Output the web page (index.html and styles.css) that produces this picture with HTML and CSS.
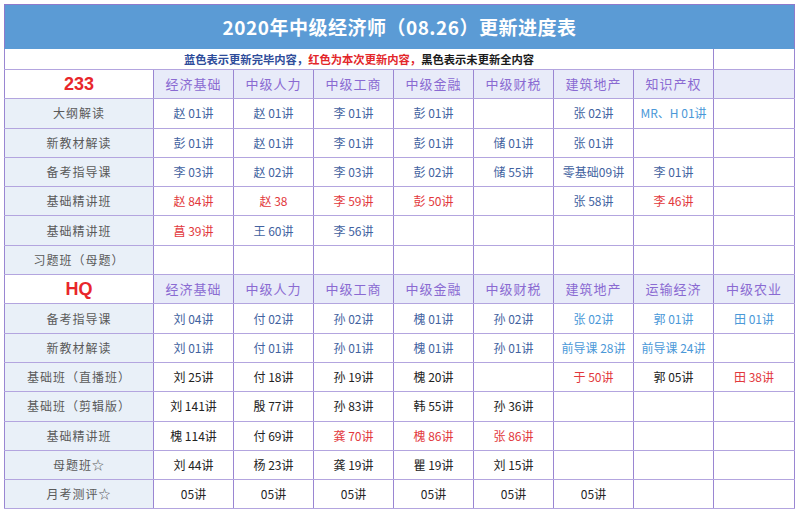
FILE: index.html
```html
<!DOCTYPE html>
<html lang="zh-CN">
<head>
<meta charset="utf-8">
<title>2020年中级经济师（08.26）更新进度表</title>
<link rel="stylesheet" href="styles.css">
</head>
<body>
<table class="sheet">
  <colgroup>
    <col class="c-label">
    <col class="c-data"><col class="c-data"><col class="c-data"><col class="c-data">
    <col class="c-data"><col class="c-data"><col class="c-data"><col class="c-last">
  </colgroup>
  <tr class="r-title"><td colspan="9" class="title">2020年中级经济师（08.26）更新进度表</td></tr>
  <tr class="r-note">
    <td colspan="8" class="note"><span class="n-blue">蓝色表示更新完毕内容，</span><span class="n-red">红色为本次更新内容，</span><span class="n-black">黑色表示未更新全内容</span></td>
    <td></td>
  </tr>

  <tr class="r-head">
    <td class="brand">233</td>
    <td class="hd">经济基础</td><td class="hd">中级人力</td><td class="hd">中级工商</td><td class="hd">中级金融</td>
    <td class="hd">中级财税</td><td class="hd">建筑地产</td><td class="hd">知识产权</td><td class="hd"></td>
  </tr>
  <tr>
    <td class="lbl">大纲解读</td>
    <td class="b">赵 01讲</td><td class="b">赵 01讲</td><td class="b">李 01讲</td><td class="b">彭 01讲</td>
    <td></td><td class="b">张 02讲</td><td class="lb">MR、H 01讲</td><td></td>
  </tr>
  <tr>
    <td class="lbl">新教材解读</td>
    <td class="b">彭 01讲</td><td class="b">赵 01讲</td><td class="b">李 01讲</td><td class="b">彭 01讲</td>
    <td class="b">储 01讲</td><td class="b">张 01讲</td><td></td><td></td>
  </tr>
  <tr>
    <td class="lbl">备考指导课</td>
    <td class="b">李 03讲</td><td class="b">赵 02讲</td><td class="b">李 03讲</td><td class="b">彭 02讲</td>
    <td class="b">储 55讲</td><td class="b">零基础09讲</td><td class="b">李 01讲</td><td></td>
  </tr>
  <tr>
    <td class="lbl">基础精讲班</td>
    <td class="r">赵 84讲</td><td class="r">赵 38</td><td class="r">李 59讲</td><td class="r">彭 50讲</td>
    <td></td><td class="b">张 58讲</td><td class="r">李 46讲</td><td></td>
  </tr>
  <tr>
    <td class="lbl">基础精讲班</td>
    <td class="r">菖 39讲</td><td class="b">王 60讲</td><td class="b">李 56讲</td><td></td>
    <td></td><td></td><td></td><td></td>
  </tr>
  <tr>
    <td class="lbl">习题班（母题）</td>
    <td></td><td></td><td></td><td></td><td></td><td></td><td></td><td></td>
  </tr>

  <tr class="r-head">
    <td class="brand">HQ</td>
    <td class="hd">经济基础</td><td class="hd">中级人力</td><td class="hd">中级工商</td><td class="hd">中级金融</td>
    <td class="hd">中级财税</td><td class="hd">建筑地产</td><td class="hd">运输经济</td><td class="hd">中级农业</td>
  </tr>
  <tr>
    <td class="lbl">备考指导课</td>
    <td class="b">刘 04讲</td><td class="b">付 02讲</td><td class="b">孙 02讲</td><td class="b">槐 01讲</td>
    <td class="b">孙 02讲</td><td class="lb">张 02讲</td><td class="lb">郭 01讲</td><td class="lb">田 01讲</td>
  </tr>
  <tr>
    <td class="lbl">新教材解读</td>
    <td class="b">刘 01讲</td><td class="b">付 01讲</td><td class="b">孙 01讲</td><td class="b">槐 01讲</td>
    <td class="b">孙 01讲</td><td class="lb">前导课 28讲</td><td class="lb">前导课 24讲</td><td></td>
  </tr>
  <tr>
    <td class="lbl">基础班（直播班）</td>
    <td class="k">刘 25讲</td><td class="k">付 18讲</td><td class="k">孙 19讲</td><td class="k">槐 20讲</td>
    <td></td><td class="r">于 50讲</td><td class="k">郭 05讲</td><td class="r">田 38讲</td>
  </tr>
  <tr>
    <td class="lbl">基础班（剪辑版）</td>
    <td class="k">刘 141讲</td><td class="k">殷 77讲</td><td class="k">孙 83讲</td><td class="k">韩 55讲</td>
    <td class="k">孙 36讲</td><td></td><td></td><td></td>
  </tr>
  <tr>
    <td class="lbl">基础精讲班</td>
    <td class="k">槐 114讲</td><td class="k">付 69讲</td><td class="r">龚 70讲</td><td class="r">槐 86讲</td>
    <td class="r">张 86讲</td><td></td><td></td><td></td>
  </tr>
  <tr>
    <td class="lbl">母题班☆</td>
    <td class="k">刘 44讲</td><td class="k">杨 23讲</td><td class="k">龚 19讲</td><td class="k">瞿 19讲</td>
    <td class="k">刘 15讲</td><td></td><td></td><td></td>
  </tr>
  <tr>
    <td class="lbl">月考测评☆</td>
    <td class="k">05讲</td><td class="k">05讲</td><td class="k">05讲</td><td class="k">05讲</td>
    <td class="k">05讲</td><td class="k">05讲</td><td></td><td></td>
  </tr>
</table>
</body>
</html>
```

FILE: styles.css
```css
html, body {
  margin: 0;
  padding: 0;
  background: #ffffff;
}

body {
  padding: 4px 0 0 4px;
  font-family: "Noto Sans CJK SC", "Noto Sans", "Liberation Sans", sans-serif;
}

.sheet {
  border-collapse: collapse;
  table-layout: fixed;
  width: 790px;
  border: 1px solid #8f7acb;
}

.c-label { width: 149px; }
.c-data { width: 80px; }
.c-last { width: 81px; }

.sheet td {
  border-left: 1px solid #9a86d2;
  border-right: 1px solid #9a86d2;
  border-top: 1px solid #b3a5df;
  border-bottom: 1px solid #b3a5df;
  padding: 0;
  text-align: center;
  vertical-align: middle;
  font-size: 12px;
  line-height: 14px;
  white-space: nowrap;
  height: 28.3px;
}

.sheet .r-title td {
  height: 43px;
  background: #5b9bd5;
  color: #ffffff;
  font-size: 19px;
  font-weight: 700;
  letter-spacing: 0.5px;
  border: 1px solid #8f7acb;
  border-bottom-color: #5b9bd5;
}

.sheet .r-note td {
  height: 20px;
  font-size: 11.3px;
  line-height: 14px;
  font-weight: 700;
  border-top: none;
}

.n-blue { color: #2e4c9a; }
.n-red { color: #e3262a; }
.n-black { color: #1a1a1a; }

.sheet .brand {
  color: #e8262b;
  font-family: "Liberation Sans", "Noto Sans", sans-serif;
  font-size: 18px;
  font-weight: 700;
  background: #ffffff;
}

.sheet .hd {
  background: #e8ebf9;
  color: #8a6ad2;
  font-size: 13px;
  letter-spacing: 1px;
}

.sheet .lbl {
  background: #e9f0f8;
  color: #5a5a5a;
  font-size: 12px;
  letter-spacing: 1px;
}

.b { color: #4262a0; }
.lb { color: #4a98d8; }
.r { color: #e2383c; }
.k { color: #222222; }
```
